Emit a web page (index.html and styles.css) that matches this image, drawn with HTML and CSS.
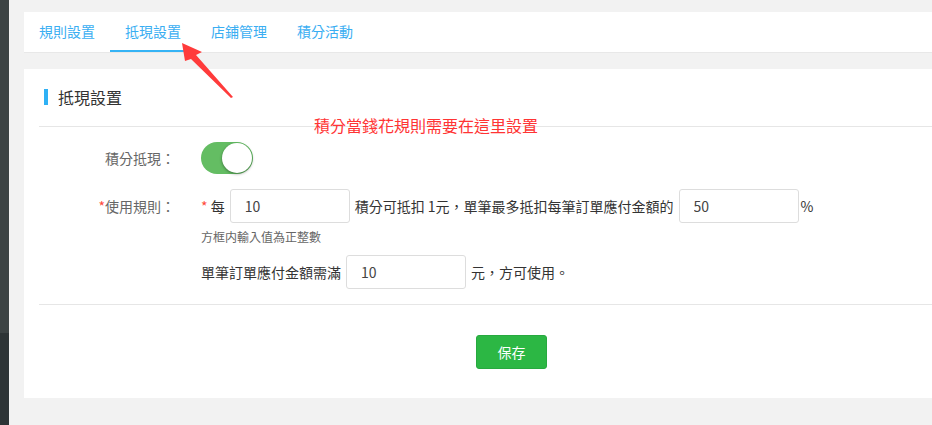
FILE: index.html
```html
<!DOCTYPE html>
<html lang="zh-Hant">

<head>
    <meta charset="UTF-8">
    <meta name="viewport" content="width=device-width, initial-scale=1.0">
    <title>抵現設置</title>
    <link rel="stylesheet" href="styles.css">
</head>

<body>
    <div class="sidebar"></div>

    <div class="main">
        <!-- Tabs -->
        <ul class="tabs">
            <li class="tab">規則設置</li>
            <li class="tab active">抵現設置</li>
            <li class="tab">店鋪管理</li>
            <li class="tab">積分活動</li>
        </ul>

        <!-- Settings panel -->
        <div class="panel">
            <h3 class="panel-title">抵現設置</h3>
            <p class="note">積分當錢花規則需要在這里設置</p>

            <div class="form">
                <div class="form-row">
                    <label class="form-label">積分抵現：</label>
                    <div class="switch on"><span class="knob"></span></div>
                </div>

                <div class="form-row">
                    <label class="form-label"><span class="star">*</span>使用規則：</label>
                    <div class="form-body">
                        <div class="line">
                            <span><span class="star">*</span> 每</span>
                            <input class="num" type="text" value="10">
                            <span>積分可抵扣 1元，單筆最多抵扣每筆訂單應付金額的</span>
                            <input class="num" type="text" value="50">
                            <span class="pct">%</span>
                        </div>
                        <p class="hint">方框内輸入值為正整數</p>
                        <div class="line">
                            <span>單筆訂單應付金額需滿</span>
                            <input class="num" type="text" value="10">
                            <span>元，方可使用。</span>
                        </div>
                    </div>
                </div>
            </div>

            <div class="divider"></div>

            <div class="actions">
                <button class="btn-save">保存</button>
            </div>
        </div>
    </div>

    <!-- annotation arrow -->
    <svg class="arrow" width="932" height="425" viewBox="0 0 932 425">
        <polygon points="182,43 202,52 196,55 233,97 231,98 191,59 185,61" fill="#ff3b3b" />
    </svg>
</body>

</html>
```

FILE: styles.css
```css
/* General */
body {
    margin: 0;
    display: flex;
    height: 425px;
    background: #f2f2f2;
    font-family: "Noto Sans CJK TC", "Noto Sans", sans-serif;
    font-size: 14px;
    color: #333;
    overflow: hidden;
    position: relative;
}

.sidebar {
    width: 9px;
    flex-shrink: 0;
    background: linear-gradient(#3c4344 0, #3c4344 333px, #2d3436 333px, #2d3436 100%);
}

.main {
    flex: 1;
    padding: 12px 0 0 15px;
}

/* Tabs */
.tabs {
    display: flex;
    margin: 0;
    padding: 0;
    list-style: none;
    height: 40px;
    background: #fff;
    border-bottom: 1px solid #e8e8e8;
}

.tab {
    padding: 0 15px;
    line-height: 39px;
    color: #3aaef2;
    border-bottom: 2px solid transparent;
}

.tab.active {
    border-bottom-color: #35b3f5;
}

/* Panel */
.panel {
    position: relative;
    margin-top: 16px;
    height: 329px;
    background: #fff;
}

.panel-title {
    margin: 0 0 0 15px;
    padding: 18px 0 19px 5px;
    border-bottom: 1px solid #e6e6e6;
    display: flex;
    align-items: center;
    font-size: 16px;
    font-weight: normal;
    line-height: 20px;
    color: #333;
}

.panel-title::before {
    content: "";
    width: 4px;
    height: 16px;
    margin-right: 10px;
    background: #2fb1f5;
}

.note {
    position: absolute;
    left: 290px;
    top: 46px;
    margin: 0;
    font-size: 16px;
    line-height: 20px;
    color: #ff3434;
}

/* Form */
.form {
    padding-left: 15px;
}

.form-row {
    display: flex;
    align-items: flex-start;
    margin-top: 15px;
}

.form-row:first-child {
    align-items: center;
}

.form-label {
    width: 136px;
    margin-right: 26px;
    text-align: right;
    color: #666;
    line-height: 34px;
}

.form-row:first-child .form-label {
    line-height: 32px;
}

.star {
    color: #ff4a3a;
}

.line {
    display: flex;
    align-items: center;
    height: 34px;
    line-height: 20px;
}

.num {
    box-sizing: border-box;
    width: 120px;
    height: 34px;
    margin: 0 5px;
    padding: 0 14px;
    border: 1px solid #ddd;
    border-radius: 3px;
    font-family: inherit;
    font-size: 14px;
    color: #444;
    outline: none;
}

.pct {
    margin-left: -3px;
}

.hint {
    margin: 6px 0 10px;
    font-size: 12px;
    line-height: 16px;
    color: #666;
}

/* Switch */
.switch {
    position: relative;
    width: 52px;
    height: 32px;
    border-radius: 16px;
    background: #64bd63;
}

.switch .knob {
    position: absolute;
    top: 1px;
    right: 1px;
    width: 30px;
    height: 30px;
    border-radius: 50%;
    background: #fff;
    box-shadow: 0 1px 3px rgba(0, 0, 0, 0.4);
}

.divider {
    margin: 15px 0 0 15px;
    border-top: 1px solid #e6e6e6;
}

.actions {
    padding: 30px 0 0 452px;
}

.btn-save {
    width: 71px;
    height: 34px;
    border: 1px solid #27a93f;
    border-radius: 3px;
    background: #2cb744;
    color: #fff;
    font-family: inherit;
    font-size: 14px;
    cursor: pointer;
}

.arrow {
    position: absolute;
    left: 0;
    top: 0;
    pointer-events: none;
}
```
